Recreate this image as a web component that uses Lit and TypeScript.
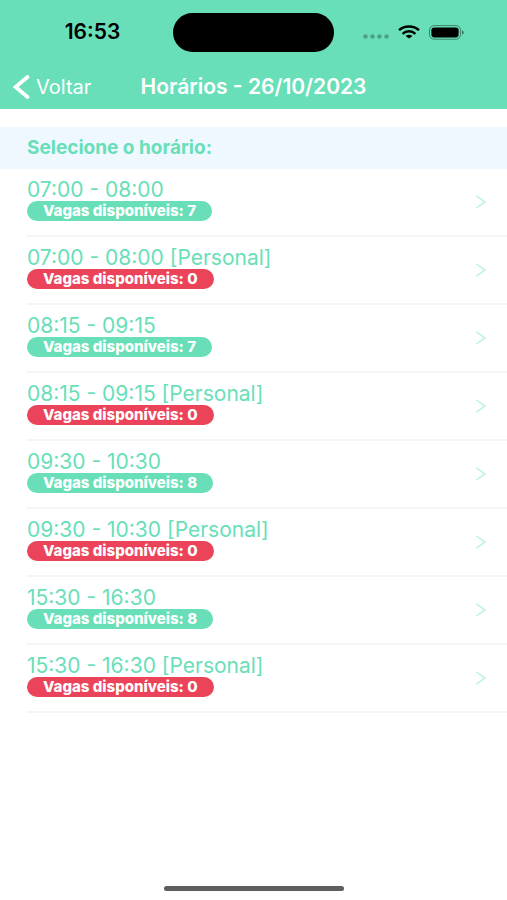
import { LitElement, html, css } from "lit";
import { customElement, property } from "lit/decorators.js";
import { classMap } from "lit/directives/class-map.js";

interface Slot {
  label: string;
  vacancies: number;
}

const SLOTS: Slot[] = [
  { label: "07:00 - 08:00", vacancies: 7 },
  { label: "07:00 - 08:00 [Personal]", vacancies: 0 },
  { label: "08:15 - 09:15", vacancies: 7 },
  { label: "08:15 - 09:15 [Personal]", vacancies: 0 },
  { label: "09:30 - 10:30", vacancies: 8 },
  { label: "09:30 - 10:30 [Personal]", vacancies: 0 },
  { label: "15:30 - 16:30", vacancies: 8 },
  { label: "15:30 - 16:30 [Personal]", vacancies: 0 },
];

@customElement("status-bar")
export class StatusBar extends LitElement {
  static styles = css`
    :host {
      display: grid;
      grid-template-columns: 1fr auto 1fr;
      align-items: center;
      height: 64px;
      color: #000;
    }
    .time {
      justify-self: center;
      padding-left: 12px;
      font-size: 21px;
      line-height: 24px;
      font-weight: 600;
    }
    .island {
      width: 161px;
      height: 39px;
      border-radius: 20px;
      background: #000;
    }
    .icons {
      display: flex;
      align-items: center;
      gap: 9px;
      padding-left: 29px;
    }
    svg {
      display: block;
    }
  `;

  render() {
    return html`
      <span class="time">16:53</span>
      <span class="island"></span>
      <span class="icons">
        <svg width="26" height="16" viewBox="0 0 26 16" fill="#000" fill-opacity="0.28" aria-hidden="true">
          <circle cx="2.5" cy="12.5" r="2.2" />
          <circle cx="9.5" cy="12.5" r="2.2" />
          <circle cx="16.5" cy="12.5" r="2.2" />
          <circle cx="23.5" cy="12.5" r="2.2" />
        </svg>
        <svg width="22" height="14" viewBox="0 0 22 14" fill="none" stroke="#000" stroke-width="2.4" aria-hidden="true">
          <path d="M1 5.2C6.5 0.2 15.5 0.2 21 5.2" />
          <path d="M4.6 8.8C8.2 5.4 13.8 5.4 17.4 8.8" />
          <path d="M11 13.6L7.6 10.9C9.4 9.3 12.6 9.3 14.4 10.9Z" fill="#000" stroke="none" />
        </svg>
        <svg width="36" height="15" viewBox="0 0 36 15" aria-hidden="true">
          <rect x="0.5" y="0.6" width="31" height="13.6" rx="4.5" fill="none" stroke="#000" stroke-opacity="0.4" />
          <rect x="2.4" y="2.4" width="27.2" height="10" rx="2.8" fill="#000" />
          <path d="M33 5.4C35.2 6 35.2 9 33 9.6Z" fill="#000" fill-opacity="0.5" />
        </svg>
      </span>
    `;
  }
}

@customElement("slot-row")
export class SlotRow extends LitElement {
  @property() label = "";
  @property({ type: Number }) vacancies = 0;

  static styles = css`
    :host {
      display: block;
      padding-left: 27px;
    }
    .row {
      display: flex;
      align-items: center;
      justify-content: space-between;
      box-sizing: border-box;
      width: 100%;
      height: 68px;
      margin: 0;
      padding: 0 20px 0 0;
      border: 0;
      border-bottom: 2px solid #f5f5f6;
      background: none;
      color: #68dfb8;
      font: inherit;
      text-align: left;
      cursor: pointer;
    }
    .info {
      display: flex;
      flex-direction: column;
      align-items: flex-start;
      padding-bottom: 4px;
    }
    .label {
      font-size: 21px;
      line-height: 22px;
    }
    .badge {
      padding: 0 16px;
      border-radius: 10px;
      background: #68dfb8;
      color: #fff;
      font-size: 15px;
      line-height: 20px;
      font-weight: 800;
    }
    .full {
      background: #eb445a;
    }
  `;

  render() {
    return html`
      <button class="row" type="button">
        <span class="info">
          <span class="label">${this.label}</span>
          <span class=${classMap({ badge: true, full: this.vacancies === 0 })}
            >Vagas disponíveis: ${this.vacancies}</span
          >
        </span>
        <svg width="12" height="14" viewBox="0 0 12 14" fill="none" stroke="#c6f3e4" stroke-width="1.6" aria-hidden="true">
          <path d="M1.5 1L10 7L1.5 13" />
        </svg>
      </button>
    `;
  }
}

@customElement("app-root")
export class AppRoot extends LitElement {
  static styles = css`
    :host {
      display: flex;
      flex-direction: column;
      min-height: 100vh;
      background: #fff;
      font-family: Inter, "Liberation Sans", sans-serif;
    }
    header {
      background: #68dfb8;
      color: #fff;
    }
    .nav {
      display: grid;
      grid-template-columns: 1fr auto 1fr;
      align-items: center;
      height: 45px;
    }
    .back {
      justify-self: start;
      display: flex;
      align-items: center;
      gap: 6px;
      margin: 0;
      padding: 0 0 0 13px;
      border: 0;
      background: none;
      color: inherit;
      font: inherit;
      font-size: 20px;
      line-height: 24px;
      cursor: pointer;
    }
    h1 {
      margin: 0;
      font-size: 21px;
      line-height: 24px;
      font-weight: 600;
    }
    main {
      flex: 1;
      padding-top: 18px;
    }
    h2 {
      margin: 0;
      padding: 10px 27px;
      background: #f0f8ff;
      color: #68dfb8;
      font-size: 19px;
      line-height: 22px;
      font-weight: 700;
    }
    ul {
      margin: 0;
      padding: 0;
      list-style: none;
    }
    footer {
      display: flex;
      justify-content: center;
      padding-bottom: 9px;
    }
    .home {
      width: 180px;
      height: 5px;
      border-radius: 3px;
      background: #5e5e5e;
    }
  `;

  render() {
    return html`
      <header>
        <status-bar></status-bar>
        <div class="nav">
          <button class="back" type="button">
            <svg width="17" height="24" viewBox="0 0 17 24" fill="none" stroke="#fff" stroke-width="3.8" aria-hidden="true">
              <path d="M14.5 2L2.6 12L14.5 22" stroke-linecap="round" />
            </svg>
            Voltar
          </button>
          <h1>Horários - 26/10/2023</h1>
        </div>
      </header>
      <main>
        <h2>Selecione o horário:</h2>
        <ul>
          ${SLOTS.map(
            (s) => html`<li><slot-row .label=${s.label} .vacancies=${s.vacancies}></slot-row></li>`
          )}
        </ul>
      </main>
      <footer><span class="home"></span></footer>
    `;
  }
}
